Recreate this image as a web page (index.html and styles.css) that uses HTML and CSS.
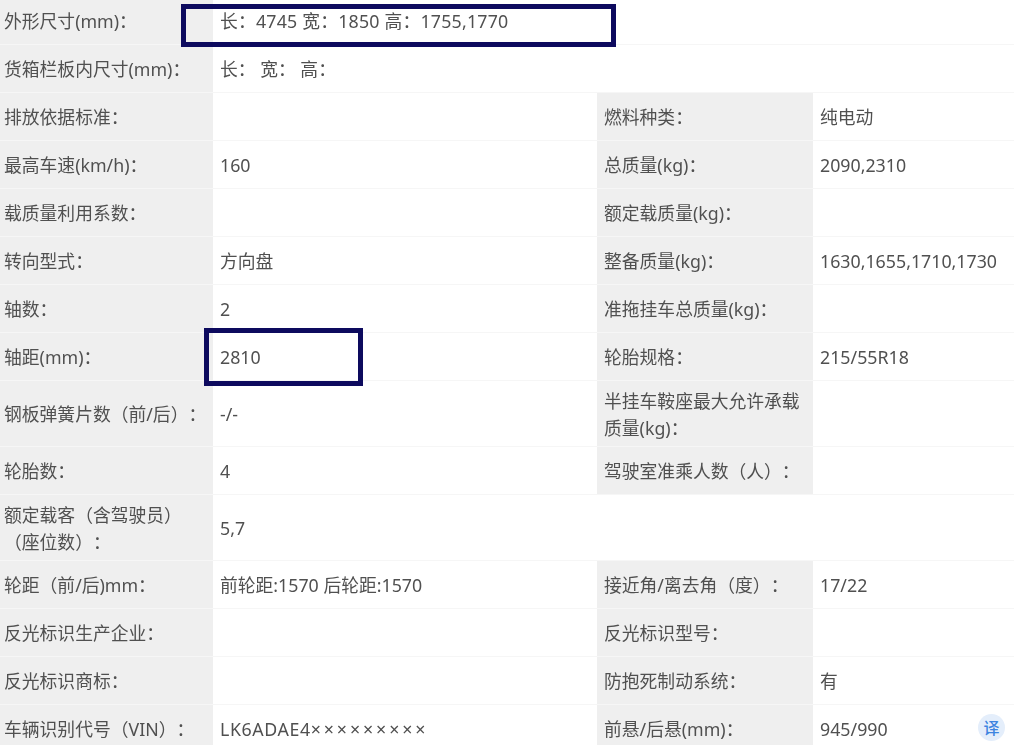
FILE: index.html
```html
<!DOCTYPE html>
<html lang="zh-CN">
<head>
<meta charset="utf-8">
<title>车辆参数</title>
<link rel="stylesheet" href="styles.css">
</head>
<body>
<main class="page">
<table class="spec">
<colgroup><col class="c1"><col class="c2"><col class="c3"><col class="c4"></colgroup>
<tbody>
<tr><th>外形尺寸(mm)：</th><td colspan="3" class="mark-host"><span class="dims">长：4745 宽：1850 高：1755,1770</span><span class="mark mark-size"></span></td></tr>
<tr><th>货箱栏板内尺寸(mm)：</th><td colspan="3">长： 宽： 高：</td></tr>
<tr><th>排放依据标准：</th><td></td><th>燃料种类：</th><td>纯电动</td></tr>
<tr><th>最高车速(km/h)：</th><td>160</td><th>总质量(kg)：</th><td>2090,2310</td></tr>
<tr><th>载质量利用系数：</th><td></td><th>额定载质量(kg)：</th><td></td></tr>
<tr><th>转向型式：</th><td>方向盘</td><th>整备质量(kg)：</th><td>1630,1655,1710,1730</td></tr>
<tr><th>轴数：</th><td>2</td><th>准拖挂车总质量(kg)：</th><td></td></tr>
<tr><th>轴距(mm)：</th><td class="mark-host">2810<span class="mark mark-wheelbase"></span></td><th>轮胎规格：</th><td>215/55R18</td></tr>
<tr class="tall"><th>钢板弹簧片数（前/后）：</th><td>-/-</td><th>半挂车鞍座最大允许承载质量(kg)：</th><td></td></tr>
<tr><th>轮胎数：</th><td>4</td><th>驾驶室准乘人数（人）：</th><td></td></tr>
<tr class="tall"><th>额定载客（含驾驶员）<br>（座位数）：</th><td colspan="3">5,7</td></tr>
<tr><th>轮距（前/后)mm：</th><td>前轮距:1570 后轮距:1570</td><th>接近角/离去角（度）：</th><td>17/22</td></tr>
<tr><th>反光标识生产企业：</th><td></td><th>反光标识型号：</th><td></td></tr>
<tr><th>反光标识商标：</th><td></td><th>防抱死制动系统：</th><td>有</td></tr>
<tr><th>车辆识别代号（VIN）：</th><td><span class="vin">LK6ADAE4</span><span class="masked">×××××××××</span></td><th>前悬/后悬(mm)：</th><td>945/990</td></tr>
</tbody>
</table>
<span class="translate">译</span>
</main>
</body>
</html>
```
FILE: styles.css
```css
html, body {
  margin: 0;
  padding: 0;
  background: #fff;
}
.page {
  position: relative;
  width: 1014px;
  height: 745px;
  overflow: hidden;
}
.spec {
  width: 1014px;
  margin-top: -3px;
  table-layout: fixed;
  border-collapse: separate;
  border-spacing: 0;
  font-family: "Noto Sans", "Noto Sans CJK SC", sans-serif;
  font-size: 17.8px;
  line-height: 27px;
  color: #505050;
  text-spacing-trim: space-all;
  filter: blur(0.45px);
}
.c1 { width: 213px; }
.c2 { width: 384px; }
.c3 { width: 216px; }
.c4 { width: 201px; }
.spec tr { height: 48px; }
.spec tr.tall { height: 66px; }
.spec th, .spec td {
  box-sizing: border-box;
  padding: 2px 7px 0;
  border-bottom: 1px solid #f6f6f6;
  font-weight: 400;
  text-align: left;
  vertical-align: middle;
}
.spec th {
  background: #efefef;
}
.spec tr > th:first-child {
  padding-left: 4px;
  padding-right: 0;
}
.dims {
  letter-spacing: 0.2px;
}
.vin {
  letter-spacing: 0.6px;
}
.masked {
  letter-spacing: 2.9px;
}
.mark-host {
  position: relative;
}
.mark {
  position: absolute;
  box-sizing: border-box;
  border: 5px solid #0d0a5e;
}
.mark-size {
  left: -32px;
  top: 7px;
  width: 435px;
  height: 43px;
}
.mark-wheelbase {
  left: -9px;
  top: -5px;
  width: 159px;
  height: 58px;
}
.translate {
  position: absolute;
  left: 978px;
  top: 714px;
  width: 27px;
  height: 27px;
  border-radius: 50%;
  background: #e4eefb;
  color: #3d84e0;
  font-family: "Noto Sans CJK SC", sans-serif;
  font-size: 16px;
  font-weight: 500;
  line-height: 27px;
  text-align: center;
}
```
